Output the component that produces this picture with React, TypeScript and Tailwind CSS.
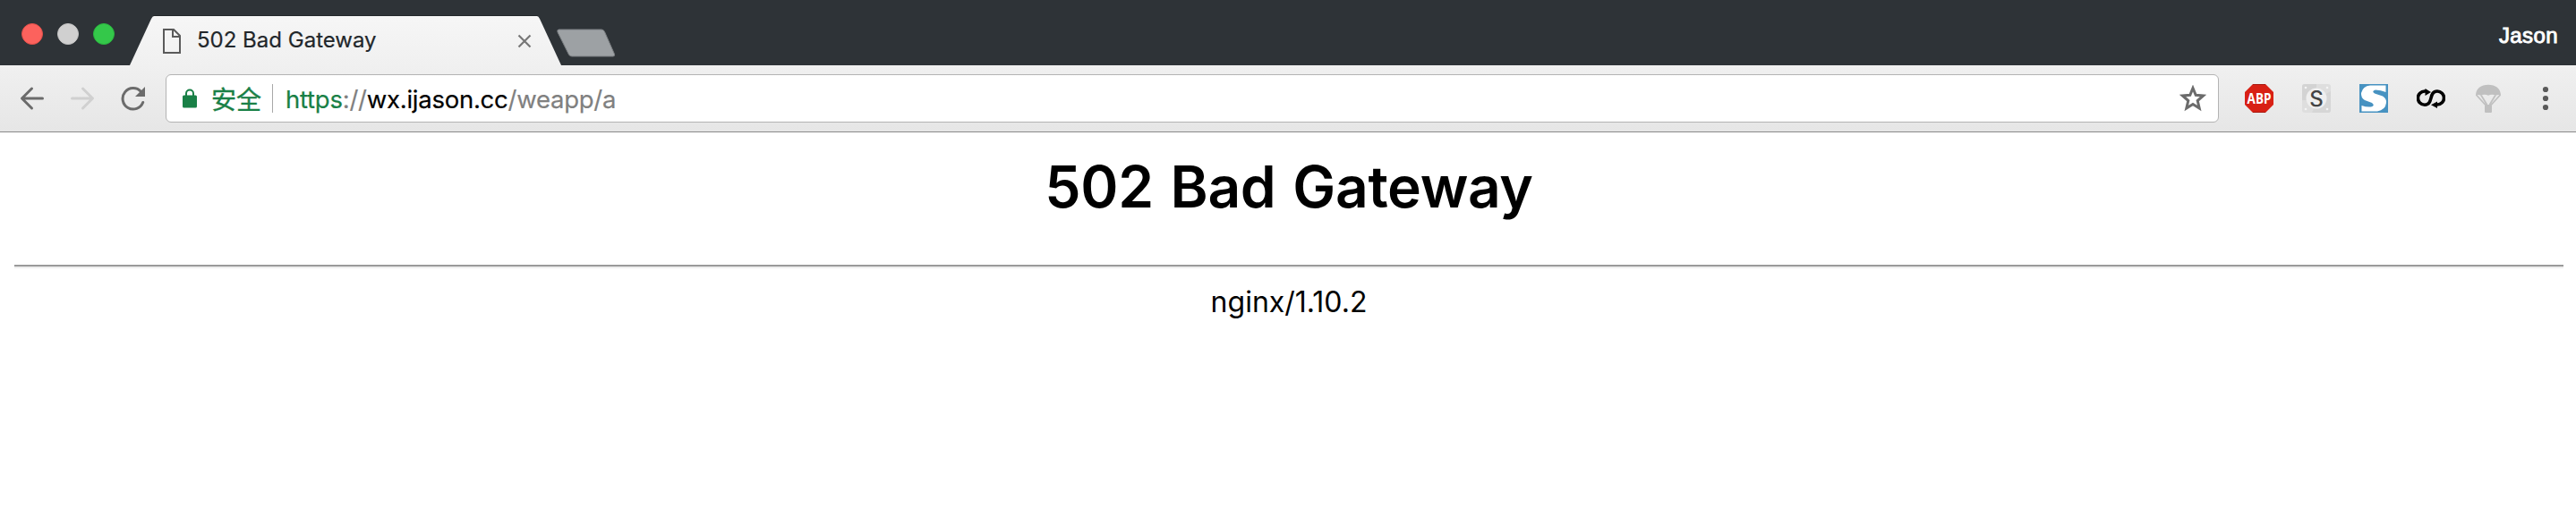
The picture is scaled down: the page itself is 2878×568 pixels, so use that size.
function TabStrip() {
  return (
    <header className="flex h-[73px] items-end bg-[#2e3337]">
      <div className="mb-[23px] ml-6 flex gap-4">
        <span className="size-6 rounded-full border border-[#e2504a] bg-[#fc625d]" />
        <span className="size-6 rounded-full border border-[#c2c2c2] bg-[#d0d0d0]" />
        <span className="size-6 rounded-full border border-[#2ab53e] bg-[#34c84a]" />
      </div>
      <div className="ml-[17px] grid h-[56px] w-[484px]">
        <svg className="col-start-1 row-start-1" width="484" height="56" viewBox="0 0 484 56">
          <defs>
            <linearGradient id="tab" x1="0" y1="0" x2="0" y2="1">
              <stop offset="0" stopColor="#f6f6f6" />
              <stop offset="1" stopColor="#f0f0f0" />
            </linearGradient>
          </defs>
          <path d="M0 56 24 4Q25.500 1 27 1H455Q456.500 1 458 4L482 56Z" fill="url(#tab)" />
          <path d="M26 .5H456" stroke="#22272a" />
        </svg>
        <div className="z-10 col-start-1 row-start-1 flex items-center pt-[2px] pr-[35px] pl-[37px]">
          <svg width="20" height="28" viewBox="0 0 20 28" fill="none" stroke="#5a5a5a" strokeWidth="2">
            <path d="M1 1H12L19 8V27H1ZM11 1V9H19" />
          </svg>
          <span className="-mt-[2px] ml-[18px] flex-1 whitespace-nowrap font-['Inter',sans-serif] text-[24px] leading-[30px] text-[#22272b] [-webkit-text-stroke:0.2px_#22272b]">
            502 Bad Gateway
          </span>
          <svg width="16" height="16" viewBox="0 0 16 16" fill="none" stroke="#777" strokeWidth="2.200">
            <path d="M1.500 1.500 14.500 14.500M14.500 1.500 1.500 14.500" />
          </svg>
        </div>
      </div>
      <svg className="mb-[9px] -ml-[7px]" width="66" height="32" viewBox="0 0 66 32">
        <path d="M2.500 1H50Q52.500 1 53.500 3.500L64.500 28.500Q65 31 63 31H17Q14.500 31 13.500 29L1 4Q0 1 2.500 1Z" fill="#9da1a4" stroke="#7b7f82" />
      </svg>
      <span className="mr-[20px] mb-[19px] ml-auto font-['Liberation_Sans',sans-serif] text-[24px] leading-[28px] tracking-[0.4px] text-white [-webkit-text-stroke:0.9px_white]">
        Jason
      </span>
    </header>
  );
}

function NavButtons() {
  return (
    <div className="flex w-[185px] shrink-0 items-center pl-[22px]">
      <svg width="28" height="28" viewBox="0 0 28 28" fill="none" stroke="#6b6b6b" strokeWidth="3" strokeLinecap="round" strokeLinejoin="round">
        <path d="M25.500 14H3M13.500 3 2.500 14 13.500 25" />
      </svg>
      <svg className="ml-[28px]" width="28" height="28" viewBox="0 0 28 28" fill="none" stroke="#d0d0d0" strokeWidth="3" strokeLinecap="round" strokeLinejoin="round">
        <path d="M2.500 14H25M14.500 3 25.500 14 14.500 25" />
      </svg>
      <svg className="ml-[28px]" width="30" height="28" viewBox="0 0 30 28" fill="none">
        <path d="M23.500 6.500A11.700 11.700 0 1 0 25.700 18.500" stroke="#6b6b6b" strokeWidth="3" strokeLinecap="round" />
        <path d="M28 1V12H17Z" fill="#6b6b6b" />
      </svg>
    </div>
  );
}

function AddressBar() {
  return (
    <div className="flex h-[54px] w-[2294px] items-center rounded-[6px] border border-[#b3b3b3] bg-white pr-[13px] pl-[18px]">
      <svg width="16" height="22" viewBox="0 0 16 22">
        <path d="M4 9V5.500a4 4 0 0 1 8 0V9" fill="none" stroke="#198046" strokeWidth="2" />
        <rect y="7.500" width="16" height="14" rx="1.500" fill="#198046" />
      </svg>
      <span className="mb-px ml-[16px] font-['Noto_Sans_CJK_SC',sans-serif] text-[28px] leading-[40px] text-[#198046] [-webkit-text-stroke:0.4px_#198046]">安全</span>
      <span className="mr-[14px] ml-[12px] h-8 w-px bg-[#a8a8a8]" />
      <span className="mt-px font-['Inter',sans-serif] text-[27.5px] leading-[36px] tracking-[-0.25px] text-[#808080] [-webkit-text-stroke:0.2px]">
        <span className="text-[#198046]">https</span>://<span className="text-black">wx.ijason.cc</span>/weapp/a
      </span>
      <svg className="ml-auto" width="30" height="30" viewBox="0 0 30 30">
        <path d="M15 3.500 18.200 11.300 26.500 12 20.200 17.500 22.200 26 15 21.500 7.800 26 9.800 17.500 3.500 12 11.800 11.300Z" fill="none" stroke="#6b6b6b" strokeWidth="3" />
      </svg>
    </div>
  );
}

function Extensions() {
  return (
    <div className="ml-[29px] flex items-center gap-8">
      <svg width="32" height="32" viewBox="0 0 32 32">
        <path d="M9 0H23L32 9V23L23 32H9L0 23V9Z" fill="#d82014" />
        <path d="M9 .5H23M9 31.500H23" stroke="#a8180f" />
        <g transform="translate(16 22) scale(0.87 1)">
          <text textAnchor="middle" fill="#fff" className="font-['Open_Sans',sans-serif] text-[15.500px] font-bold">ABP</text>
        </g>
      </svg>
      <svg width="32" height="32" viewBox="0 0 32 32">
        <rect width="32" height="32" rx="3" fill="#dedede" />
        <path d="M3 0H16V9L8 18H0V3Q0 0 3 0Z" fill="#d3d3d3" />
        <path d="M25 12 32 8V29Q32 32 29 32H11L14 25Z" fill="#d6d6d6" />
        <circle cx="16" cy="16" r="11.500" fill="#efefef" />
        <g fill="#f4f4f4"><circle cx="4" cy="4" r="1.300" /><circle cx="28" cy="4" r="1.300" /><circle cx="4" cy="28" r="1.300" /><circle cx="28" cy="28" r="1.300" /></g>
        <text x="16" y="24.500" textAnchor="middle" fill="#444" className="font-['Inter',sans-serif] text-[24px] font-medium">S</text>
      </svg>
      <svg width="32" height="32" viewBox="0 0 32 32">
        <rect width="32" height="32" fill="#4792c1" />
        <path d="M12 1.500H29.500V9Q24 6.500 18 6.500 13 8 17 10.500L26 13.500Q30.500 16 30 21 29 29 20 30.500H2.500V24Q8 26 13 25.500 18 24 14 21L6 18Q1.500 15 2 10 4 2 12 1.500Z" fill="#fff" />
      </svg>
      <svg width="32" height="32" viewBox="0 0 32 32">
        <path d="M11 8.500H9A7.600 7.600 0 0 0 9 23.700C19 23.700 13 8.500 23 8.500A7.300 7.300 0 0 1 23 23.500H21" fill="none" stroke="#000" strokeWidth="3.600" transform="translate(0 -.5)" />
        <path d="M9.500 5 16 9 9.500 13ZM23 19.500V27L16 23.300Z" fill="#000" />
      </svg>
      <svg width="32" height="32" viewBox="0 0 32 32">
        <path d="M2 12.500C2 5 8 .7 16 .7S30 5 30 12.500Q27 11.500 24.500 12.800 20 10.500 16 12.800 12 10.500 7.500 12.800 5 11.500 2 12.500Z" fill="#c0c0c0" />
        <path d="M2.500 12 13 23.500M8 12.500 14.500 23M24 12.500 17.500 23M29.500 12 19 23.500" stroke="#c0c0c0" strokeWidth="1.800" />
        <rect x="12" y="23" width="8" height="9" rx="1" fill="#c0c0c0" />
      </svg>
      <svg width="32" height="32" viewBox="0 0 32 32" fill="#5a5a5a">
        <circle cx="16" cy="6" r="3.100" /><circle cx="16" cy="16" r="3.100" /><circle cx="16" cy="26" r="3.100" />
      </svg>
    </div>
  );
}

export default function App() {
  return (
    <div className="min-h-[568px] bg-white">
      <TabStrip />
      <nav className="flex h-[75px] items-center border-b border-[#8a8a8a] bg-linear-to-b from-[#f0f0f0] to-[#e6e6e6]">
        <NavButtons />
        <AddressBar />
        <Extensions />
      </nav>
      <main className="pt-4 pr-[14px] pl-4 text-center font-['Inter',sans-serif] text-black">
        <h1 className="text-[64px] leading-[90px] font-semibold tracking-[-0.3px] [word-spacing:3px]">502 Bad Gateway</h1>
        <hr className="mt-[42px] h-1 border-t-2 border-b-2 border-t-[#9a9a9a] border-b-[#eeeeee]" />
        <p className="mt-4 text-[32px] leading-[44px]">nginx/1.10.2</p>
      </main>
    </div>
  );
}
